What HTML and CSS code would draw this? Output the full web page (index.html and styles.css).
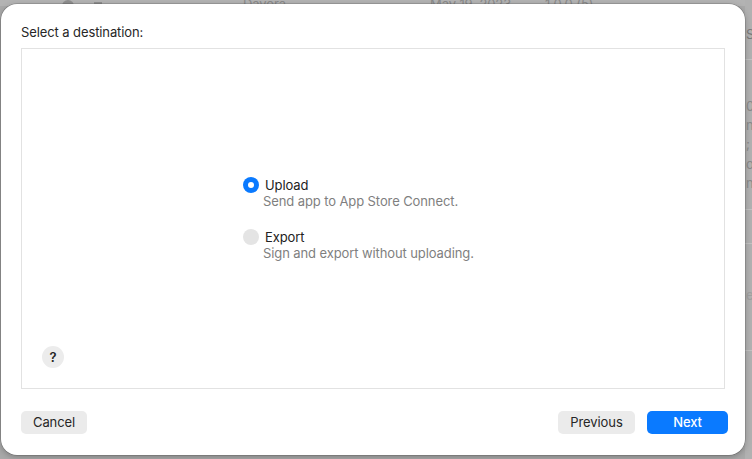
FILE: index.html
```html
<!DOCTYPE html>
<html>
<head>
<meta charset="utf-8">
<link rel="stylesheet" href="styles.css">
</head>
<body>
<div class="backdrop">
  <div class="bg-row">
    <span class="bg-dot"></span>
    <span class="bg-sq"></span>
    <span class="bg-name">Dayora</span>
    <span class="bg-date">May 19, 2023</span>
    <span class="bg-ver">1.0.0 (5)</span>
  </div>
  <div class="bg-side">
    <div class="bg-h">Stat</div>
    <div class="bg-line l1"></div>
    <div class="bg-t t1">0</div>
    <div class="bg-t t2">n</div>
    <div class="bg-t t3">; .</div>
    <div class="bg-t t4">or</div>
    <div class="bg-t t5">n6</div>
    <div class="bg-line l2"></div>
    <div class="bg-line l3"></div>
    <div class="bg-t t6">er</div>
    <div class="bg-line l4"></div>
  </div>
</div>

<div class="sheet">
  <div class="title">Select a destination:</div>
  <div class="panel">
    <div class="options">
      <div class="option">
        <span class="radio on"></span>
        <div class="opt-text">
          <div class="opt-label">Upload</div>
          <div class="opt-desc">Send app to App Store Connect.</div>
        </div>
      </div>
      <div class="option">
        <span class="radio"></span>
        <div class="opt-text">
          <div class="opt-label">Export</div>
          <div class="opt-desc">Sign and export without uploading.</div>
        </div>
      </div>
    </div>
    <button class="help">?</button>
  </div>
  <div class="actions">
    <button class="btn">Cancel</button>
    <div class="spacer"></div>
    <button class="btn prev">Previous</button>
    <button class="btn primary">Next</button>
  </div>
</div>
</body>
</html>
```

FILE: styles.css
```css
html, body {
  margin: 0;
  padding: 0;
  width: 752px;
  height: 459px;
  overflow: hidden;
}
body {
  background: #a9a9a9;
  font-family: Inter, "Helvetica Neue", "Liberation Sans", sans-serif;
  letter-spacing: -0.1px;
  position: relative;
}

.backdrop {
  position: absolute;
  inset: 0;
  color: #8a8a8a;
  font-size: 13px;
}
.bg-row {
  position: absolute;
  top: 0;
  left: 0;
  width: 752px;
  height: 6px;
  background: #b3b3b3;
  overflow: hidden;
}
.bg-row span { position: absolute; top: -2px; line-height: 13px; white-space: nowrap; }
.bg-dot { left: 62px; top: 0 !important; width: 12px; height: 12px; border-radius: 50%; background: #8e8e8e; }
.bg-sq { left: 94px; top: 2px !important; width: 8px; height: 8px; background: #8e8e8e; }
.bg-name { left: 243px; }
.bg-date { left: 430px; }
.bg-ver { left: 545px; }

.bg-side {
  position: absolute;
  left: 745px;
  top: 0;
  width: 7px;
  height: 459px;
  background: #b1b1b1;
  overflow: hidden;
}
.bg-side .bg-h, .bg-side .bg-t { position: absolute; left: 1px; white-space: nowrap; }
.bg-h { top: 26px; color: #7a7a7a; }
.t1 { top: 98px; }
.t2 { top: 117px; }
.t3 { top: 136px; }
.t4 { top: 156px; }
.t5 { top: 175px; }
.t6 { top: 287px; color: #a0a0a0; }
.bg-line { position: absolute; left: 0; width: 7px; height: 1px; background: #c2c2c2; }
.l1 { top: 59px; }
.l2 { top: 209px; }
.l3 { top: 243px; }
.l4 { top: 350px; }

.sheet {
  position: absolute;
  left: 1px;
  top: 4px;
  width: 744px;
  height: 451px;
  box-sizing: border-box;
  padding: 20px 20px 0 20px;
  background: #ffffff;
  border-radius: 16px;
  box-shadow: 0 0 0 0.5px rgba(0,0,0,0.25), 0 2px 6px rgba(0,0,0,0.25);
  display: flex;
  flex-direction: column;
}

.title {
  font-size: 13px;
  line-height: 16px;
  color: #262626;
  height: 16px;
}

.panel {
  margin-top: 8px;
  height: 341px;
  box-sizing: border-box;
  border: 1px solid #e2e2e2;
  position: relative;
  display: flex;
  align-items: center;
  padding-left: 221px;
}

.options {
  display: flex;
  flex-direction: column;
  gap: 20px;
  margin-top: 1px;
}
.option {
  display: flex;
  align-items: flex-start;
}
.radio {
  width: 16px;
  height: 16px;
  border-radius: 50%;
  background: #e4e4e4;
  box-sizing: border-box;
  display: flex;
  align-items: center;
  justify-content: center;
  flex: none;
}
.radio.on {
  background: #0a7aff;
}
.radio.on::after {
  content: "";
  width: 6px;
  height: 6px;
  border-radius: 50%;
  background: #fff;
}
.opt-text {
  margin-left: 6px;
}
.opt-label {
  font-size: 13px;
  line-height: 16px;
  color: #222;
}
.opt-desc {
  font-size: 13px;
  line-height: 16px;
  color: #7f7f7f;
  margin-left: -2px;
}

.help {
  position: absolute;
  left: 20px;
  top: 297px;
  width: 22px;
  height: 22px;
  border-radius: 50%;
  border: none;
  background: #ececec;
  padding: 0;
  font-family: inherit;
  font-size: 13px;
  font-weight: 600;
  color: #262626;
  line-height: 22px;
  text-align: center;
}

.actions {
  margin-top: 22px;
  display: flex;
  align-items: center;
  margin-right: -3px;
}
.spacer { flex: 1; }
.btn {
  height: 23px;
  border: none;
  border-radius: 5px;
  background: #ebebeb;
  color: #262626;
  font-family: inherit;
  font-size: 13px;
  letter-spacing: -0.1px;
  line-height: 23px;
  padding: 0;
  width: 66px;
}
.btn.prev {
  width: 77px;
}
.btn.primary {
  width: 81px;
  margin-left: 12px;
  background: #0a7aff;
  color: #fff;
  font-weight: 500;
}
```
